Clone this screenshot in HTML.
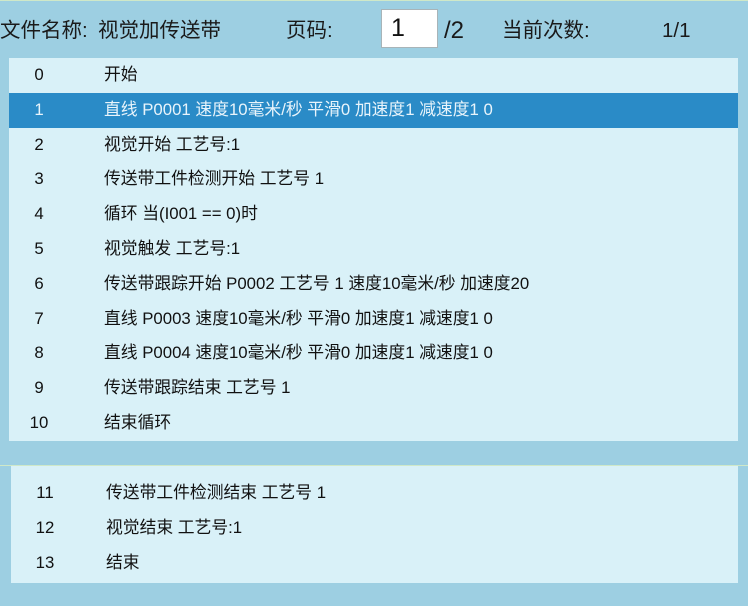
<!DOCTYPE html>
<html><head><meta charset="utf-8"><style>
*{margin:0;padding:0;box-sizing:border-box}
body{width:748px;height:606px;background:#9dcfe2;position:relative;overflow:hidden;font-family:"Liberation Sans","Noto Sans CJK SC",sans-serif;color:#111}
.topline{position:absolute;left:0;top:0;width:748px;height:1px;background:#cfe8c8}
.h{position:absolute;top:19px;font-size:20.5px;line-height:24px;color:#1a1a1a}
.box{position:absolute;left:381px;top:9px;width:57px;height:39px;background:#fff;border:1px solid #a8b4b8;font-size:25px;line-height:37px;padding-left:9px}
.panel{position:absolute;background:#d9f1f8}
.row{position:relative;height:34.8px;font-size:16.8px;line-height:34.8px}
.row .n{position:absolute;width:60px;text-align:center}
.row .t{position:absolute;white-space:nowrap}
.sel{background:#2a8bc7;color:#e8f4fb}
.sep{position:absolute;left:0;top:465px;width:748px;height:1px;background:#cfe8c8}
</style></head><body>
<div class="topline"></div>
<div class="h" style="left:0">文件名称:</div>
<div class="h" style="left:98px">视觉加传送带</div>
<div class="h" style="left:286px">页码:</div>
<div class="box">1</div>
<div class="h" style="left:444px;font-size:24px">/2</div>
<div class="h" style="left:502px">当前次数:</div>
<div class="h" style="left:662px">1/1</div>
<div class="panel" style="left:9px;top:58px;width:729px;height:383px">
<div class="row"><span class="n" style="left:0">0</span><span class="t" style="left:95px">开始</span></div>
<div class="row sel"><span class="n" style="left:0">1</span><span class="t" style="left:95px">直线 P0001 速度10毫米/秒 平滑0 加速度1 减速度1 0</span></div>
<div class="row"><span class="n" style="left:0">2</span><span class="t" style="left:95px">视觉开始 工艺号:1</span></div>
<div class="row"><span class="n" style="left:0">3</span><span class="t" style="left:95px">传送带工件检测开始 工艺号 1</span></div>
<div class="row"><span class="n" style="left:0">4</span><span class="t" style="left:95px">循环 当(I001 == 0)时</span></div>
<div class="row"><span class="n" style="left:0">5</span><span class="t" style="left:95px">视觉触发 工艺号:1</span></div>
<div class="row"><span class="n" style="left:0">6</span><span class="t" style="left:95px">传送带跟踪开始 P0002 工艺号 1 速度10毫米/秒 加速度20</span></div>
<div class="row"><span class="n" style="left:0">7</span><span class="t" style="left:95px">直线 P0003 速度10毫米/秒 平滑0 加速度1 减速度1 0</span></div>
<div class="row"><span class="n" style="left:0">8</span><span class="t" style="left:95px">直线 P0004 速度10毫米/秒 平滑0 加速度1 减速度1 0</span></div>
<div class="row"><span class="n" style="left:0">9</span><span class="t" style="left:95px">传送带跟踪结束 工艺号 1</span></div>
<div class="row"><span class="n" style="left:0">10</span><span class="t" style="left:95px">结束循环</span></div>
</div>
<div class="sep"></div>
<div class="panel" style="left:11px;top:466px;width:727px;height:117px">
<div style="height:10px"></div>
<div class="row"><span class="n" style="left:4px">11</span><span class="t" style="left:95px">传送带工件检测结束 工艺号 1</span></div>
<div class="row"><span class="n" style="left:4px">12</span><span class="t" style="left:95px">视觉结束 工艺号:1</span></div>
<div class="row"><span class="n" style="left:4px">13</span><span class="t" style="left:95px">结束</span></div>
</div>
</body></html>
